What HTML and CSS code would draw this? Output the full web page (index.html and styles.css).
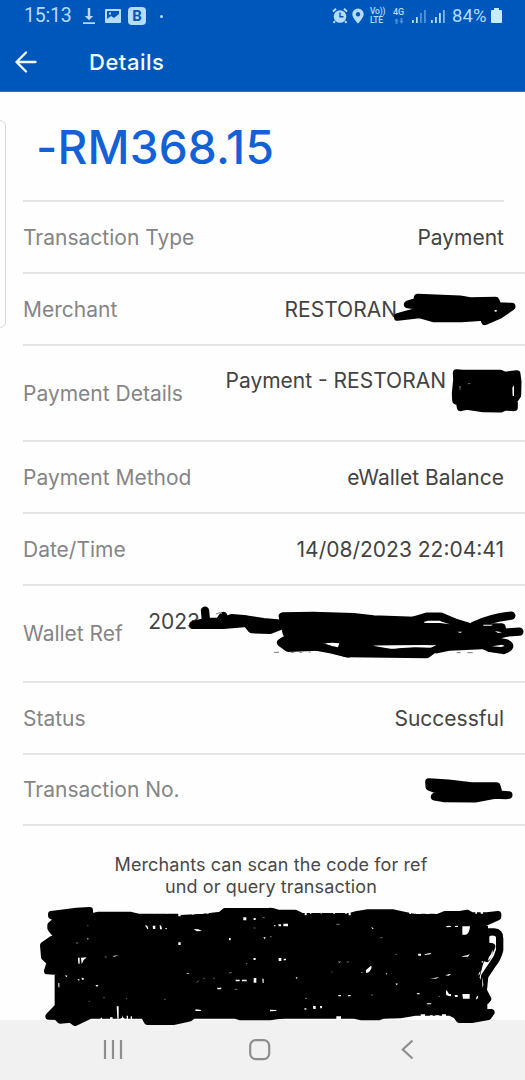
FILE: index.html
```html
<!DOCTYPE html>
<html lang="en">
<head>
<meta charset="utf-8">
<title>Details</title>
<link rel="stylesheet" href="styles.css">
</head>
<body>
<div class="screen">
  <header class="header">
    <div class="status">
      <div class="status-left">
        <span class="clock">15:13</span>
        <svg class="ic-download" width="12" height="18" viewBox="0 0 12 18"><path d="M4.800 1h2.400v8h3L6 13.300 1.800 9h3zM0 15.200h12v1.700H0z"/></svg>
        <svg class="ic-picture" width="16" height="16" viewBox="0 0 16 16"><path fill-rule="evenodd" d="M1 1h14q1 0 1 1v12q0 1-1 1H1q-1 0-1-1V2q0-1 1-1zM2 3v8l4-3 3 2 5-4V3zM4 4.500h2v2H4z"/></svg>
        <span class="badge-b">B</span>
        <span class="dot"></span>
      </div>
      <div class="status-right">
        <svg width="16" height="18" viewBox="0 0 16 18"><circle cx="8" cy="9.500" r="6.300"/><path class="ln" d="M1 4.500 4 1.800M15 4.500 12 1.800M3 14l-1.500 2M13 14l1.500 2"/><path class="cut" d="M8 5.500v4.300h3.500"/></svg>
        <svg class="ic-pin" width="12" height="18" viewBox="0 0 12 18"><path fill-rule="evenodd" d="M6 1.500a5.700 5.700 0 0 1 5.700 5.700C11.700 11 6 16.500 6 16.500S.3 11 .3 7.200A5.700 5.700 0 0 1 6 1.500zm0 3.600a2.200 2.200 0 1 0 .01 0z"/></svg>
        <span class="volte"><span>Vo))</span><span>LTE</span></span>
        <span class="net">4G<svg width="10" height="6" viewBox="0 0 10 6"><path d="M2.500 0 4.500 3h-1v3h-2V3h-1zM7.500 6 5.500 3h1V0h2v3h1z"/></svg></span>
        <svg class="ic-signal" width="14" height="16" viewBox="0 0 14 16"><path d="M0 12h1.800v3H0zM4 9h1.800v6H4z"/><path opacity=".45" d="M8 5h1.800v10H8zM12 2h1.800v13H12z"/></svg>
        <svg class="ic-signal2" width="14" height="16" viewBox="0 0 14 16"><path d="M0 12h1.800v3H0zM4 9h1.800v6H4zM8 5h1.800v10H8z"/><path opacity=".7" d="M12 2h1.800v13H12z"/></svg>
        <span class="percent">84%</span>
        <svg class="ic-batt" width="11" height="16" viewBox="0 0 11 16"><path d="M3 0h5v2h2q1 0 1 1v11q0 1-1 1H1q-1 0-1-1V3q0-1 1-1h2z"/></svg>
      </div>
    </div>
    <div class="titlebar">
      <svg width="22" height="22" viewBox="0 0 22 22"><path d="M20.500 11H1.500M11 1.500 1.500 11l9.500 9.500"/></svg>
      <h1 class="title">Details</h1>
    </div>
  </header>

  <main class="content">
    <div class="amount">-RM368.15</div>
    <dl class="rows">
      <div class="row first"><dt>Transaction Type</dt><dd>Payment</dd></div>
      <div class="row"><dt>Merchant</dt><dd class="merchant">RESTORAN</dd></div>
      <div class="row tall"><dt>Payment Details</dt><dd class="details">Payment - RESTORAN<br>&nbsp;</dd></div>
      <div class="row"><dt>Payment Method</dt><dd>eWallet Balance</dd></div>
      <div class="row"><dt>Date/Time</dt><dd class="date">14/08/2023 22:04:41</dd></div>
      <div class="row tall"><dt>Wallet Ref</dt><dd class="ref">2023<br>&nbsp;</dd></div>
      <div class="row"><dt>Status</dt><dd>Successful</dd></div>
      <div class="row"><dt>Transaction No.</dt><dd></dd></div>
    </dl>
    <p class="hint">Merchants can scan the code for ref<br>und or query transaction</p>
  </main>

  <nav class="nav">
    <svg width="20" height="22" viewBox="0 0 20 22"><path d="M2 1v19M10 1v19M18 1v19"/></svg>
    <svg width="22" height="22" viewBox="0 0 22 22"><rect x="1.200" y="1.200" width="19" height="19" rx="5.500"/></svg>
    <svg width="13" height="22" viewBox="0 0 13 22"><path d="M11.500 1.500 1.800 10.500l9.700 9"/></svg>
  </nav>

  <div class="edge-panel"></div>

  <svg class="ink" width="525" height="1080" viewBox="0 0 525 1080">
    <!-- merchant and payment details strokes -->
    <g transform="translate(260 200) scale(.33333)">
      <path class="b22" d="M473 293 600 298 630 303 707 302 714 318 755 320 720 344 675 364 671 351 605 355 520 355 478 343 413 351 470 335 478 318 443 313 470 305z"/>
      <path class="gap" d="M704 330h6v5h-6z"/>
      <path class="b22" d="M590 519 608 521H722L735 527 770 522 773 545 772 586 762 600 762 622 735 620 722 626 670 625 620 618 602 622 599 606 588 602 587 580 591 540z"/>
      <path class="gap" d="M757 563l5-7v32h-4zM599 558h2l-1 18zM624 551l11-2-10 4z"/>
    </g>
    <!-- wallet reference strokes -->
    <g transform="translate(140 590) scale(.33333)">
      <path class="b24" d="M428 79 520 77 640 81 700 88 825 92 850 110 1000 112 1085 112 1090 128 1050 144 930 152 690 155 550 149 440 130z"/>
      <path class="b24" d="M160 105H250L320 99 335 118 390 120 436 102 370 96 320 88 275 84 245 95 200 95z"/>
      <path class="s24" d="M195 62 198 95M238 95 250 78M820 92 860 80H902L950 100 990 112M1000 108Q1050 84 1114 77M1070 134 1105 127 1138 125"/>
      <path class="b24" d="M423 158 445 174 530 170 540 150 435 150zM620 160 680 166 700 178 760 188 880 178 860 193 620 190 585 180zM920 150H1030L1040 165 930 170 890 178z"/>
      <path class="s24" d="M530 170 575 178 625 190M1030 164 1050 174 1090 180Q1120 170 1098 160L1040 148"/>
      <path class="gap" d="M555 160q22-3 43 0l-4 12q-18-2-39-12zM698 167 889 166 872 173Q812 169 752 176 724 171 698 167zM866 96h40q15 4 24 7-28-5-64-7zM1030 104h28l-4 3h-24zM952 125h14l-5 4zM1056 169l30-5 8 4-10 3zM1065 123l21 4-12 2z"/>
      <path class="faint" d="M402 187h15M452 187h10M478 187h8M506 186h6M228 72q10-7 18-1M950 188h12M982 188h16"/>
    </g>
    <!-- transaction number strokes -->
    <g transform="translate(380 690) scale(.33333)">
      <path class="b22" d="M147 276 205 280 275 288 350 288 354 302 356 313 386 315 378 316 345 315 285 326 190 325 164 320 184 304 148 291z"/>
    </g>
    <!-- code area: left part, then right part -->
    <g transform="translate(30 895) scale(.33333)">
      <path class="b20" d="M64 58 140 48 179 46 180 66 206 60H300L325 66H440L452 70 520 66 572 60 585 49H728L742 54 760 56V360L720 366H632L615 361H490L478 370 430 380H352L342 361H295L288 361V348L268 340V361L182 361 135 383 122 373 90 376 80 365 56 364 84 335V230L52 228 60 202 43 186 40 151 80 123 62 100 62 90 84 72 64 62z"/>
      <path class="gap" d="M345 91l7 1 3 10h-3zM368 92h8v10h-7zM389 90l5 3 2 10h-6zM404 100l8-1-3 4zM491 102l14 1 11 5-16 1zM640 67h9v9h-9zM671 69h6v6h-6zM445 142h7v8h-7zM597 129h5v7h-5zM144 188h5v18h-4zM153 188l17-1-9 8-6 12zM105 241l8 1-4 5zM142 254l6-3v6zM155 248l6 1v5h-5zM196 270h9l-4 6zM617 254h12v5h-12zM636 254h14v5h-14zM671 249h8v14h-8zM697 251h4v13h-3zM562 278h13l-3 5h-10zM497 343l17 2-2 3h-16zM719 345l20 0-1 4-18 1zM670 189h7v6h-6zM700 126l7 1-3 6zM743 192h7v7h-6zM85 264h3v14l-3-3zM172 128l4 3-3 4zM468 234l9 1-2 3zM247 183l20-2-14 4zM260 334h6v37h-4zM290 362h4v10h-4zM302 364h4v8h-4zM445 52h7v12h-7zM487 52h4v7h-4zM370 50h5v5h-5zM405 50h10v5h-10zM530 50h6v6h-6zM212 368h4v5h-4zM240 367h8v6h-8z"/>
      <path class="faint" d="M172 92h3M138 144h7M220 308h4M403 313h4M500 263l6-6M520 252l4-4M614 283h8M648 206h4M597 233h8M698 68h6M714 125h10M671 99h5M552 248v4M176 319h3M224 186h6M288 310h3"/>
    </g>
    <g transform="translate(270 895) scale(.33333)">
      <path class="b20" d="M0 48 20 54H75L95 64H240L262 58 290 53H370L430 66H505L525 58H570L592 54 605 62H650L684 58 684 66 644 84 644 160 628 210 618 250 640 285 654 312 642 325 642 348 664 352 655 365 605 374H568L558 361 540 352H440L390 360 340 361 325 366H275L250 361H0z"/>
      <path class="s22" d="M650 111H672Q690 112 689 130V165Q684 188 668 208L644 244 640 285M650 111V145M665 155 650 190"/>
      <path class="gap" d="M12 91h5l-1 3h-4zM25 88h8v6h-7zM40 86h14v8H40zM26 189h8v9h-8zM41 191h7v5h-7zM529 93l12-1 3 4-14 1zM554 93l10-1v4h-9zM577 94h23q-1 20-12 25h-11zM444 176h9v6h-8zM464 178l12-3h9l-4 3-17 2zM576 184l15-3 8-3-5 7h-16zM658 124q20-5 20 8v20q-4-8-12-9l-8 0zM667 164q6 20-14 34l4-12q8-8 10-22zM634 200l6-2-2 6zM288 225l15-13 2 4q-3 16-17 18zM526 241l12-4 5 1-7 4zM479 250l12-1 17-3-10 5zM528 284q6 5 9 13h6v7q-14-1-15-7zM554 300h9v6h-8zM577 297h22v14h-20zM618 310q2-9 7-8-1 10-5 12zM129 333h8v9h-7zM150 333h6v7h-5zM204 200h9l-4 3zM205 300h8v4h-8zM234 300h8v4h-7zM440 294l9 1v3h-7zM470 325h15l-3 3h-10zM103 340h6v4h-5zM303 96l8 4-3 3zM0 344l18 1 2 3-20 1zM638 246l2 24-3 8v-22zM273 232l4-2v4zM348 233l4 3-3 3zM376 266l7-1-2 6zM632 228q-1 10-7 14l2-8zM77 247l6 0-4 5z"/>
      <path class="gap" d="M104 52h6v9h-6zM120 51h4v5h-4zM152 51h3v5h-3zM190 51h5v5h-5zM226 51h4v6h-4zM236 52h6v9h-6zM418 51h5v6h-5zM438 51h16v6h-16zM466 51h13v6h-13zM494 51h6v6h-6zM616 50h5v6h-5zM632 50h7v6h-7zM199 364h14v8h-14zM433 364h8v8h-8zM452 358h13v14h-13zM480 361h8v11h-8zM496 361h12v11h-12zM516 358h12v14h-12zM406 368h4v5h-4z"/>
      <path class="faint" d="M199 88h10M331 128h6M0 125h5M230 201h6M105 310h6M303 300h6M377 178h4M506 304h4M184 231h3"/>
    </g>
  </svg>
</div>
</body>
</html>
```
FILE: styles.css
```css
* { box-sizing: border-box; }
body { margin: 0; background: #fefefe; font-family: Inter, "Liberation Sans", sans-serif; }
.screen { position: relative; width: 525px; height: 1080px; overflow: hidden; display: flex; flex-direction: column; background: #fefefe; }

.header { height: 92px; background: #0057bb; color: #f2fbff; flex: none; border-bottom: 1px solid #2876c5; }
.status { height: 32px; display: flex; justify-content: space-between; align-items: center; padding: 0 23px 0 24px; color: #b4dcff; font-family: Roboto, sans-serif; }
.status svg { fill: #b4dcff; display: block; flex: none; }
.status .ln { stroke: #b4dcff; stroke-width: 2; fill: none; }
.status .cut { stroke: #0057bb; stroke-width: 1.4; fill: none; }
.status-left, .status-right { display: flex; align-items: center; }
.clock { font-size: 19.5px; width: 48px; line-height: 32px; white-space: nowrap; letter-spacing: -0.2px; }
.ic-download { margin-left: 11px; }
.ic-picture { margin-left: 10px; }
.badge-b { margin-left: 7px; width: 18px; height: 18px; border-radius: 4px; background: #b4dcff; color: #0757ae; font: bold 15px/18px Roboto, sans-serif; text-align: center; }
.dot { width: 3px; height: 3px; border-radius: 2px; background: #b4dcff; margin-left: 14px; }
.ic-pin { margin-left: 4px; }
.volte { display: flex; flex-direction: column; font-size: 8.5px; line-height: 9px; font-weight: 500; width: 16px; margin-left: 6px; letter-spacing: -0.2px; white-space: nowrap; }
.net { font-size: 9px; line-height: 9px; font-weight: 500; width: 12px; margin-left: 7px; }
.net svg { margin: 1px 0 0 1px; opacity: .4; }
.ic-signal { margin-left: 7px; }
.ic-signal2 { margin-left: 5px; }
.percent { font-size: 18.5px; width: 35px; margin-left: 7px; white-space: nowrap; letter-spacing: .1px; }
.status .ic-batt { margin-left: 4px; fill: #c5edff; }
.titlebar { height: 60px; display: flex; align-items: center; padding-left: 15px; }
.titlebar svg { fill: none; stroke: #effaff; stroke-width: 2.3; stroke-linecap: round; stroke-linejoin: round; }
.title { margin: 0 0 0 52px; font-size: 22px; font-weight: 500; letter-spacing: .5px; }

.content { flex: 1; }
.amount { height: 108px; padding-left: 36px; font-size: 46px; line-height: 110px; font-weight: 500; color: #1261d6; letter-spacing: .2px; }
.rows { margin: 0 0 0 23px; }
.row { height: 71.8px; border-top: 2px solid #e5e5e5; display: flex; justify-content: space-between; align-items: center; padding-right: 21px; padding-top: 1px; color: #434343; font-size: 21px; line-height: 25px; }
.row.first { border-top: 0; padding-top: 3px; background: linear-gradient(#e5e5e5, #e5e5e5) 0 0 / 481px 2px no-repeat; }
.row.tall { height: 96.8px; }
.row:last-child { border-bottom: 2px solid #e5e5e5; height: 73px; }
.row dt { color: #858585; }
.row dd { margin: 0; white-space: nowrap; }
.row .merchant { margin-right: 107px; }
.row .details { margin-right: 58px; }
.row .ref { margin-right: 304px; }
.hint { margin: 28px 0 0; text-align: center; font-size: 18px; line-height: 22px; color: #484848; letter-spacing: .1px; padding-left: 17px; }

.nav { height: 60px; flex: none; background: #f1f1f1; display: flex; align-items: center; padding: 0 111px 0 103px; justify-content: space-between; }
.nav svg { fill: none; stroke: #8e8e8e; stroke-width: 2.2; }
.nav svg:nth-child(2) { margin-right: 5px; }
.edge-panel { position: absolute; left: -8px; top: 120px; width: 14px; height: 208px; border: 1px solid #dadada; border-radius: 6px; }
.ink { position: absolute; left: 0; top: 0; stroke-linejoin: round; stroke-linecap: round; }
.ink .b20 { stroke: #000; stroke-width: 20; }
.ink .b22 { stroke: #000; stroke-width: 23; }
.ink .b24 { stroke: #000; stroke-width: 24; }
.ink .s22 { fill: none; stroke: #000; stroke-width: 22; }
.ink .s24 { fill: none; stroke: #000; stroke-width: 25; }
.ink .gap { fill: #fff; }
.ink .faint { fill: none; stroke: #777; stroke-width: 3; stroke-linecap: butt; }
```
